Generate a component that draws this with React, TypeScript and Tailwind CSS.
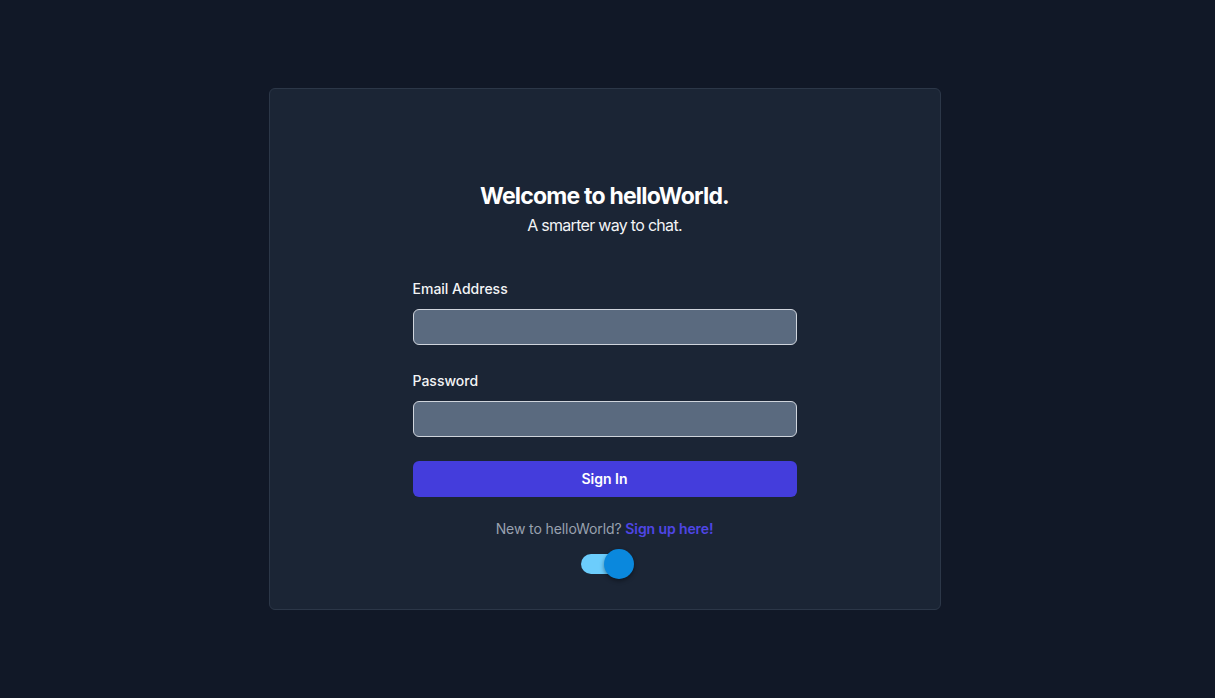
import { useState } from "react"

export default function App() {
  const [dark, setDark] = useState(true)

  return (
    <div className="min-h-screen bg-[#111827] pt-[88px] pr-[6px] font-['Inter',sans-serif]">
      <div className="mx-auto w-[672px] h-[522px] rounded-md border border-[#2c3748] bg-[#1b2535] pt-[91px]">
        {/* Heading */}
        <div className="text-center">
          <h1 className="text-[23px] leading-8 font-bold text-white tracking-[-0.8px]">Welcome to helloWorld.</h1>
          <p className="mt-px text-base text-gray-100 tracking-[-0.7px]">A smarter way to chat.</p>
        </div>

        {/* Form */}
        <form className="mx-auto mt-[42px] w-[384px]" onSubmit={(e) => e.preventDefault()}>
          <label className="block text-sm font-medium text-gray-100">Email Address</label>
          <input
            type="email"
            className="mt-[10px] block h-9 w-full rounded-md border border-[#cfd4dc] bg-[#5a6a7f] px-3 text-sm text-white outline-none"
          />

          <label className="mt-[26px] block text-sm font-medium text-gray-100">Password</label>
          <input
            type="password"
            className="mt-[10px] block h-9 w-full rounded-md border border-[#cfd4dc] bg-[#5a6a7f] px-3 text-sm text-white outline-none"
          />

          <button
            type="submit"
            className="mt-6 h-9 w-full rounded-md bg-[#443ddc] text-sm font-semibold text-white"
          >
            Sign In
          </button>
        </form>

        <p className="mt-[22px] text-center text-sm text-gray-400 tracking-[-0.1px]">
          New to helloWorld? <a className="font-semibold text-[#4f46e5]">Sign up here!</a>
        </p>

        {/* Theme toggle */}
        <div className="mt-[10px] flex justify-center pl-[6px]">
          <button
            type="button"
            onClick={() => setDark(!dark)}
            className="relative h-[30px] w-[53px]"
          >
            <span className="absolute left-0 top-[5px] h-[20px] w-[46px] rounded-full bg-[#6ccdfc]" />
            <span
              className={`absolute top-0 h-[30px] w-[30px] rounded-full bg-[#0a88dd] shadow-[0_2px_4px_rgba(0,0,0,0.4)] ${
                dark ? "left-[23px]" : "left-0"
              }`}
            />
          </button>
        </div>
      </div>
    </div>
  )
}
